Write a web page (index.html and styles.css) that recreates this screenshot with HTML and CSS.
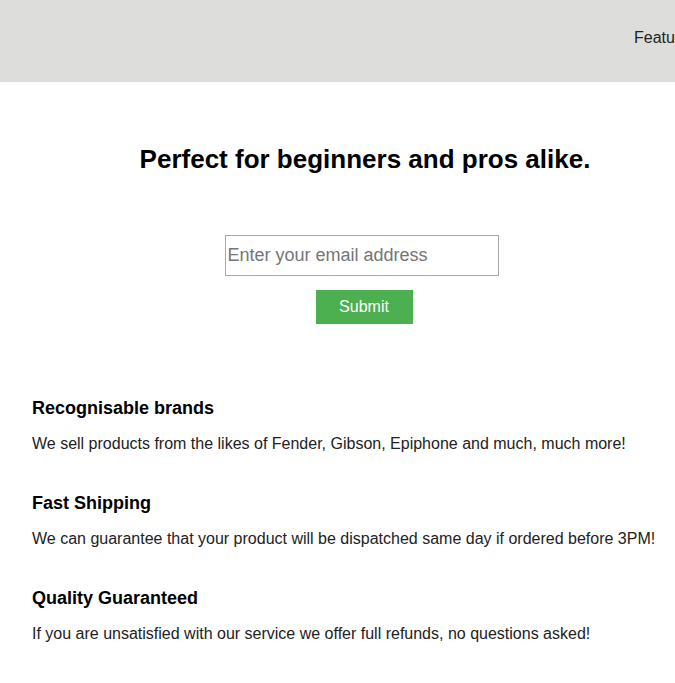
FILE: index.html
```html
<!DOCTYPE html>
<html lang="en">
<head>
<meta charset="utf-8">
<title>Guitar Shop</title>
<link rel="stylesheet" href="styles.css">
</head>
<body>
<header class="site-header">
  <div class="logo-area"></div>
  <nav class="nav">
    <a class="nav-link" href="#features">Features</a>
    <a class="nav-link" href="#how">How It Works</a>
    <a class="nav-link" href="#pricing">Pricing</a>
  </nav>
</header>
<main>
  <section class="hero">
    <h2 class="hero-title">Perfect for beginners and pros alike.</h2>
    <form class="signup" action="#">
      <input class="email" type="email" placeholder="Enter your email address">
      <button class="submit" type="submit">Submit</button>
    </form>
  </section>
  <section class="features" id="features">
    <div class="feature">
      <h3 class="feature-title">Recognisable brands</h3>
      <p class="feature-text">We sell products from the likes of Fender, Gibson, Epiphone and much, much more!</p>
    </div>
    <div class="feature">
      <h3 class="feature-title">Fast Shipping</h3>
      <p class="feature-text">We can guarantee that your product will be dispatched same day if ordered before 3PM!</p>
    </div>
    <div class="feature">
      <h3 class="feature-title">Quality Guaranteed</h3>
      <p class="feature-text">If you are unsatisfied with our service we offer full refunds, no questions asked!</p>
    </div>
  </section>
</main>
</body>
</html>
```
FILE: styles.css
```css
html, body {
  margin: 0;
  padding: 0;
  overflow: hidden;
}
body {
  font-family: "Liberation Sans", Arial, sans-serif;
  color: #000;
  background: #fff;
}
.site-header {
  height: 82px;
  background: #dddedb;
  display: flex;
  align-items: center;
  white-space: nowrap;
}
.logo-area {
  flex: 0 0 634px;
}
.nav {
  display: flex;
  gap: 24px;
  flex: 0 0 auto;
  padding-bottom: 6px;
}
.nav-link {
  color: #222;
  text-decoration: none;
  font-size: 16px;
}
.hero {
  padding-left: 50px;
  padding-top: 63px;
  text-align: center;
}
.hero-title {
  margin: 0;
  padding-left: 5px;
  font-size: 26px;
  line-height: 28px;
  font-weight: bold;
}
.signup {
  margin-top: 62px;
  display: flex;
  flex-direction: column;
  align-items: center;
}
.email {
  box-sizing: border-box;
  width: 274px;
  height: 41px;
  margin-right: 2px;
  padding: 0 2px;
  border: 1px solid #a9a9a9;
  font-family: "Liberation Sans", Arial, sans-serif;
  font-size: 18px;
  color: #222;
  outline: none;
}
.email::placeholder {
  color: #757575;
}
.submit {
  margin-top: 14px;
  margin-left: 3px;
  width: 97px;
  height: 34px;
  border: 0;
  background: #4caf50;
  color: #fff;
  font-family: "Liberation Sans", Arial, sans-serif;
  font-size: 16px;
  padding: 0;
}
.features {
  padding: 74px 0 0 32px;
  display: flex;
  flex-direction: column;
  gap: 40px;
  white-space: nowrap;
}
.feature-title {
  margin: 0;
  font-size: 18px;
  line-height: 21px;
  font-weight: bold;
}
.feature-text {
  margin: 16px 0 0;
  font-size: 16px;
  line-height: 18px;
  color: #222;
}
```
